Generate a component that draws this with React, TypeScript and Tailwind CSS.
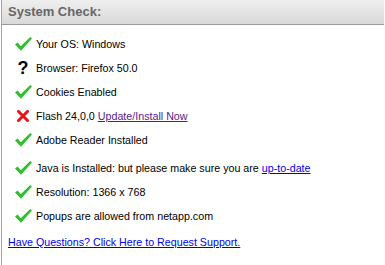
import React from "react";

type Status = "ok" | "unknown" | "fail";

type CheckRow = {
  status: Status;
  content: React.ReactNode;
  spaced?: boolean;
};

const CheckIcon = () => (
  <svg width="17" height="14" viewBox="0 0 17 14">
    <path d="M0 7.5 L2.6 5.6 L5.8 9.2 L15.2 0 L17 1.4 L6 13.8 Z" fill="#2cc12c" />
  </svg>
);

const CrossIcon = () => (
  <svg width="12" height="12" viewBox="0 0 12 12">
    <path d="M1.5 1.5 L10.5 10.5 M10.5 1.5 L1.5 10.5" stroke="#e5141b" strokeWidth="3" strokeLinecap="square" />
  </svg>
);

const StatusIcon = ({ status }: { status: Status }) => {
  if (status === "ok") return <CheckIcon />;
  if (status === "fail") return <CrossIcon />;
  return <span className="text-[18px] font-bold leading-none text-black">?</span>;
};

const rows: CheckRow[] = [
  { status: "ok", content: "Your OS: Windows" },
  { status: "unknown", content: "Browser: Firefox 50.0" },
  { status: "ok", content: "Cookies Enabled" },
  {
    status: "fail",
    content: (
      <>
        Flash 24,0,0{" "}
        <a href="#" className="text-[#551a8b] underline">
          Update/Install Now
        </a>
      </>
    ),
  },
  { status: "ok", content: "Adobe Reader Installed" },
  {
    status: "ok",
    spaced: true,
    content: (
      <>
        Java is Installed: but please make sure you are{" "}
        <a href="#" className="text-[#0000ee] underline">
          up-to-date
        </a>
      </>
    ),
  },
  { status: "ok", content: "Resolution: 1366 x 768" },
  { status: "ok", content: "Popups are allowed from netapp.com" },
];

export default function App() {
  return (
    <div className="h-[265px] w-[385px] bg-white pl-[1px] font-['Liberation_Sans',Arial,sans-serif] text-[10.7px] text-black">
      <div className="mr-[1px] h-full border-l border-[#a3a3a3]">
        {/* header */}
        <div className="flex h-[25px] items-center border-b border-[#999] bg-gradient-to-b from-[#efefef] to-[#d9d9d9] pl-[6px]">
          <h1 className="text-[13px] font-bold text-[#666]">System Check:</h1>
        </div>
        {/* checks */}
        <div className="pt-[7px]">
          {rows.map((row, i) => (
            <div key={i} className={`flex h-6 items-center ${row.spaced ? "mt-1" : ""}`}>
              <div className="ml-[11px] flex w-5 justify-center">
                <StatusIcon status={row.status} />
              </div>
              <div className="ml-[3px]">{row.content}</div>
            </div>
          ))}
          <div className="mt-[2px] flex h-6 items-center pl-[6px]">
            <a href="#" className="text-[#0000ee] underline">
              Have Questions? Click Here to Request Support.
            </a>
          </div>
        </div>
      </div>
    </div>
  );
}
